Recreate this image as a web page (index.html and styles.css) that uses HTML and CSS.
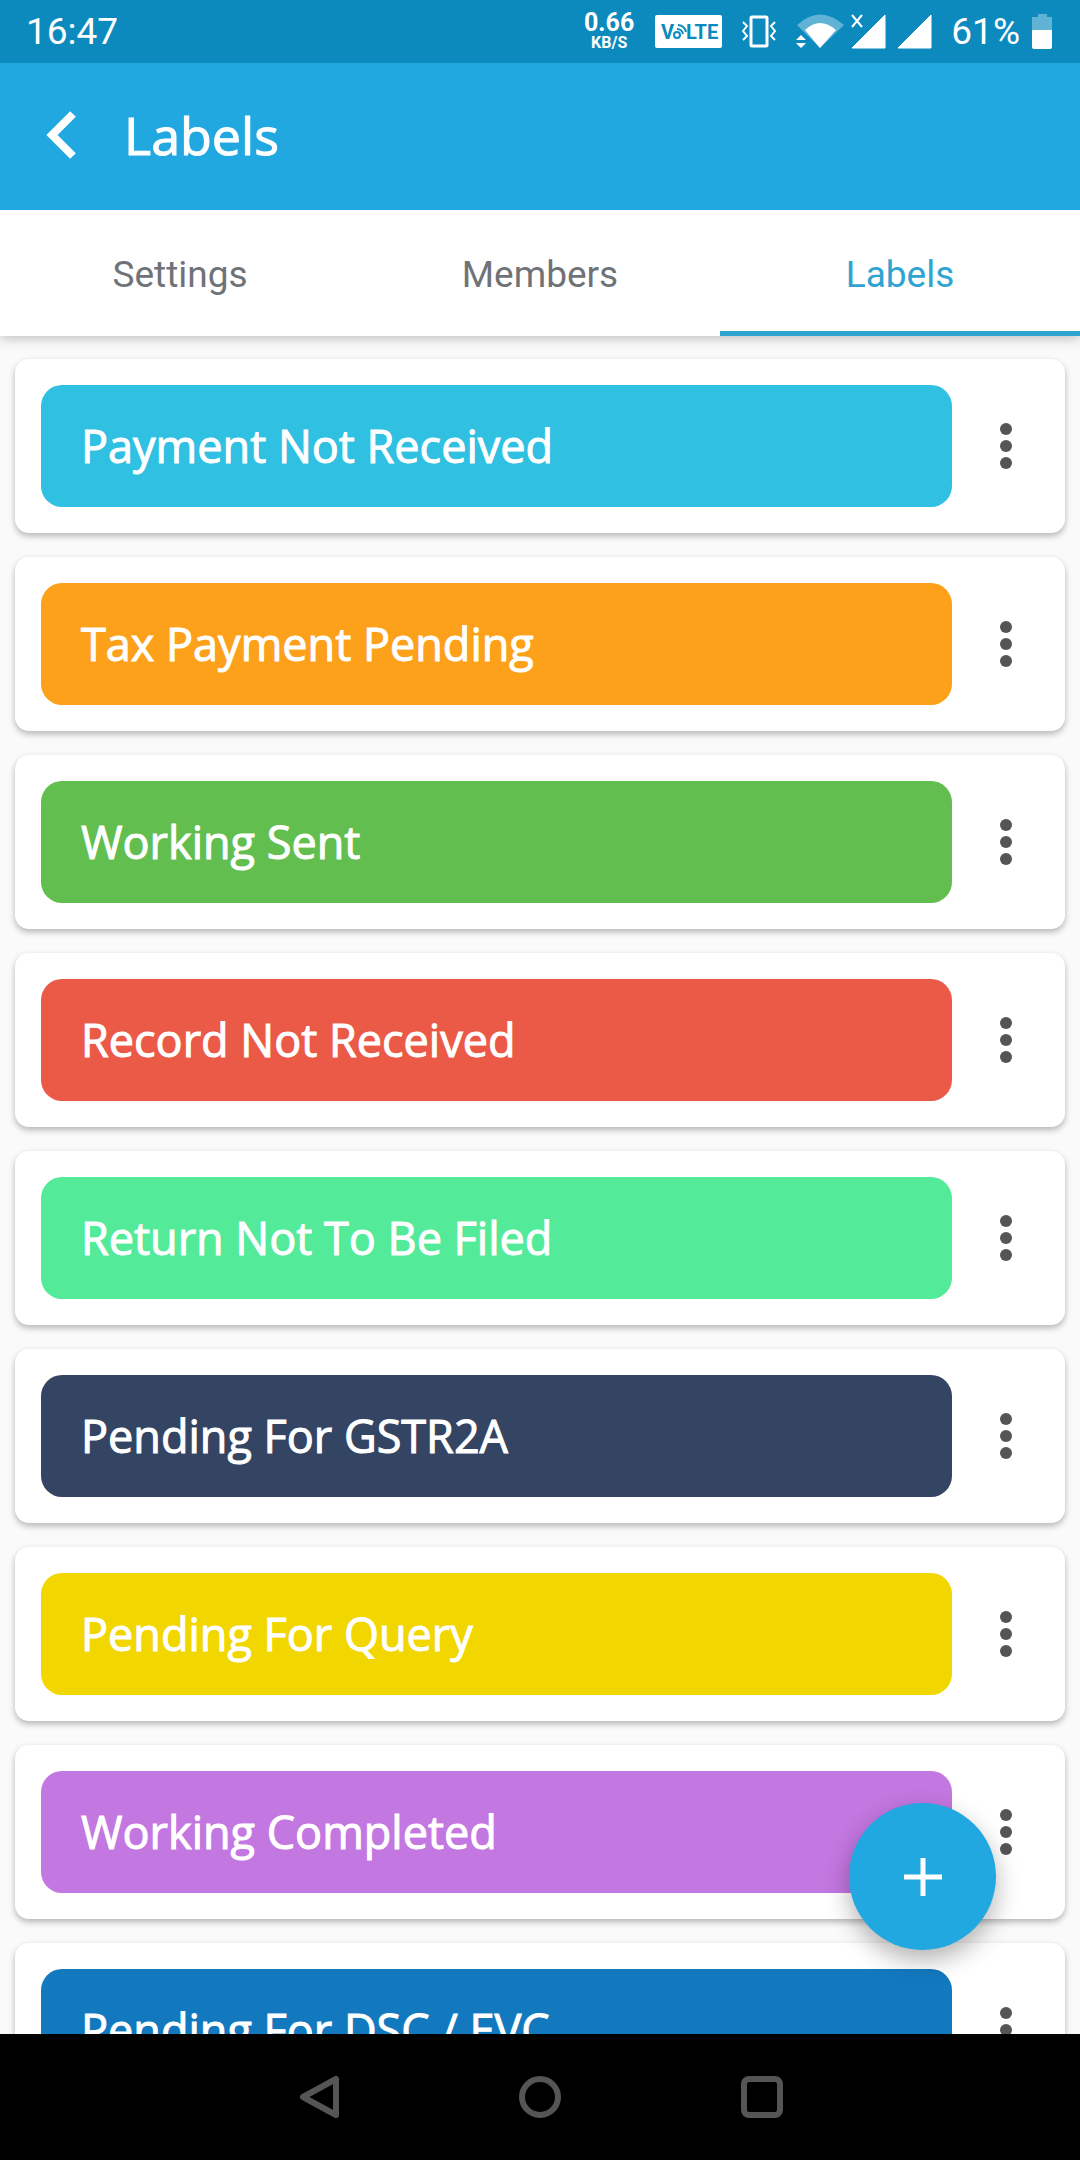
FILE: index.html
```html
<!DOCTYPE html>
<html lang="en">
<head>
    <meta charset="UTF-8">
    <meta name="viewport" content="width=device-width, initial-scale=1.0">
    <title>Labels</title>
    <link rel="stylesheet" href="styles.css">
</head>
<body>
    <div class="statusbar">
        <span class="time">16:47</span>
        <div class="status-icons">
            <div class="speed">
                <span class="speed-value">0.66</span>
                <span class="speed-unit">KB/S</span>
            </div>
            <svg class="volte" width="67" height="33" viewBox="0 0 67 33">
                <rect width="67" height="33" rx="2" fill="#fff"/>
                <text x="6" y="24">V</text>
                <text x="31" y="24">LTE</text>
                <circle cx="22" cy="20" r="3" fill="none" stroke="#0c8abe" stroke-width="2"/>
                <path d="M22 14a6 6 0 0 1 6 5M23 10a9 9 0 0 1 8 7" fill="none" stroke="#0c8abe" stroke-width="2"/>
            </svg>
            <svg class="vibrate" width="36" height="33" viewBox="0 0 36 33" fill="none" stroke="#fff">
                <rect x="10" y="2" width="16" height="29" rx="1" stroke-width="3"/>
                <path d="M2 7l4 4-4 5 4 5-4 4M34 7l-4 4 4 5-4 5 4 4" stroke-width="2"/>
            </svg>
            <svg class="wifi" width="48" height="35" viewBox="0 0 48 35">
                <path d="M1 11Q24-10 48 11L24 34z" fill="#fff" opacity=".35"/>
                <path d="M9 16Q24 2 40 16L24 34z" fill="#fff"/>
                <path d="M0 26h10L5 21zM0 29h10L5 34z" fill="#fff"/>
            </svg>
            <svg class="signal" width="35" height="35" viewBox="0 0 35 35">
                <path d="M34 1v33H1z" fill="#fff" stroke="#fff" stroke-linejoin="round"/>
                <path d="M1 1l10 12M11 1L1 13" stroke="#fff" stroke-width="2"/>
            </svg>
            <svg class="signal" width="35" height="35" viewBox="0 0 35 35">
                <path d="M34 1v33H1z" fill="#fff" stroke="#fff" stroke-linejoin="round"/>
            </svg>
            <span class="percent">61%</span>
            <svg class="battery" width="20" height="35" viewBox="0 0 20 35">
                <path d="M6 0h9v3h5v13H0V3h6z" fill="#fff" opacity=".35"/>
                <path d="M0 16h20v17a2 2 0 0 1-2 2H2a2 2 0 0 1-2-2z" fill="#fff"/>
            </svg>
        </div>
    </div>

    <header>
        <button class="back" aria-label="Back">
            <svg width="30" height="50" viewBox="0 0 30 50">
                <path d="M27 4L6 25L27 46" fill="none" stroke="#fff" stroke-width="8"/>
            </svg>
        </button>
        <h1>Labels</h1>
    </header>

    <nav class="tabs">
        <a href="#settings">Settings</a>
        <a href="#members">Members</a>
        <a href="#labels" class="active">Labels</a>
    </nav>

    <main>
        <div class="list">
            <div class="card">
                <span class="label cyan">Payment Not Received</span>
                <button class="more" aria-label="More options"><i></i><i></i><i></i></button>
            </div>
            <div class="card">
                <span class="label orange">Tax Payment Pending</span>
                <button class="more" aria-label="More options"><i></i><i></i><i></i></button>
            </div>
            <div class="card">
                <span class="label green">Working Sent</span>
                <button class="more" aria-label="More options"><i></i><i></i><i></i></button>
            </div>
            <div class="card">
                <span class="label red">Record Not Received</span>
                <button class="more" aria-label="More options"><i></i><i></i><i></i></button>
            </div>
            <div class="card">
                <span class="label mint">Return Not To Be Filed</span>
                <button class="more" aria-label="More options"><i></i><i></i><i></i></button>
            </div>
            <div class="card">
                <span class="label navy">Pending For GSTR2A</span>
                <button class="more" aria-label="More options"><i></i><i></i><i></i></button>
            </div>
            <div class="card">
                <span class="label yellow">Pending For Query</span>
                <button class="more" aria-label="More options"><i></i><i></i><i></i></button>
            </div>
            <div class="card">
                <span class="label purple">Working Completed</span>
                <button class="more" aria-label="More options"><i></i><i></i><i></i></button>
            </div>
            <div class="card">
                <span class="label blue">Pending For DSC / EVC</span>
                <button class="more" aria-label="More options"><i></i><i></i><i></i></button>
            </div>
        </div>
        <button class="add" aria-label="Add label">
            <svg width="38" height="38" viewBox="0 0 38 38">
                <path d="M19 0v38M0 19h38" stroke="#fff" stroke-width="5"/>
            </svg>
        </button>
    </main>

    <footer class="navbar">
        <button aria-label="Back">
            <svg width="44" height="44" viewBox="0 0 44 44">
                <path d="M40 4v36L7 22z"/>
            </svg>
        </button>
        <button aria-label="Home">
            <svg width="44" height="44" viewBox="0 0 44 44">
                <circle cx="22" cy="22" r="18"/>
            </svg>
        </button>
        <button aria-label="Recent apps">
            <svg width="44" height="44" viewBox="0 0 44 44">
                <rect x="4" y="4" width="36" height="36" rx="5"/>
            </svg>
        </button>
    </footer>
</body>
</html>
```

FILE: styles.css
```css
* {
    box-sizing: border-box;
}

body {
    margin: 0;
    height: 100vh;
    display: flex;
    flex-direction: column;
    background: #fafafa;
    font-family: Roboto, sans-serif;
}

button {
    padding: 0;
    border: none;
    background: none;
    cursor: pointer;
}

svg {
    display: block;
}

.statusbar {
    display: flex;
    flex-shrink: 0;
    align-items: center;
    justify-content: space-between;
    height: 63px;
    padding: 0 28px 0 26px;
    background: #0c8abe;
    color: white;
    font-size: 37px;
}

.status-icons {
    display: flex;
    align-items: center;
}

.speed {
    display: flex;
    flex-direction: column;
    align-items: center;
    font-weight: bold;
}

.speed-value {
    font-size: 25px;
    line-height: 22px;
}

.speed-unit {
    font-size: 16px;
    line-height: 18px;
}

.volte {
    margin: 0 19px 0 21px;
    font-size: 20px;
    font-weight: bold;
    fill: #0c8abe;
}

.wifi {
    margin-left: 19px;
}

.signal {
    margin-left: 7px;
}

.signal + .signal {
    margin-left: 11px;
}

.percent {
    margin: 0 12px 0 19px;
}

header {
    display: flex;
    flex-shrink: 0;
    align-items: center;
    height: 147px;
    padding: 0 46px 3px;
    background: #21a8e0;
    color: white;
}

h1 {
    margin: 0 0 0 48px;
    font-family: "Open Sans", sans-serif;
    font-size: 52px;
    font-weight: 500;
    line-height: 64px;
    -webkit-text-stroke: 1px white;
}

.tabs {
    display: flex;
    flex-shrink: 0;
    height: 126px;
    background: white;
    box-shadow: 0 2px 12px rgba(0, 0, 0, 0.25);
    clip-path: inset(0 0 -20px 0);
    z-index: 1;
}

.tabs a {
    flex: 1;
    padding-top: 8px;
    border-bottom: 5px solid transparent;
    color: #6f7377;
    font-size: 37px;
    line-height: 113px;
    text-align: center;
    text-decoration: none;
}

.tabs .active {
    border-color: #30a4d0;
    color: #30a4d0;
}

main {
    position: relative;
    flex: 1;
    min-height: 0;
}

.list {
    display: flex;
    flex-direction: column;
    gap: 24px;
    height: 100%;
    padding: 23px 15px;
    overflow-y: auto;
    scrollbar-width: none;
}

.card {
    display: flex;
    flex-shrink: 0;
    padding: 26px 5px 26px 26px;
    border-radius: 14px;
    background: white;
    box-shadow: 0 3px 6px rgba(0, 0, 0, 0.28);
}

.label {
    flex: 1;
    padding: 0 40px;
    border-radius: 21px;
    color: white;
    font-family: "Open Sans", sans-serif;
    font-size: 45px;
    font-weight: 500;
    line-height: 122px;
    -webkit-text-stroke: 1px white;
}

.cyan { background: #2fc0e2; }
.orange { background: #fda11b; }
.green { background: #62be4f; }
.red { background: #eb5a47; }
.mint { background: #53eb9a; }
.navy { background: #344563; }
.yellow { background: #f2d600; }
.purple { background: #c377e0; }
.blue { background: #1279bf; }

.more {
    display: flex;
    flex-direction: column;
    align-items: center;
    justify-content: center;
    gap: 5px;
    width: 108px;
}

.more i {
    width: 12px;
    height: 12px;
    border-radius: 50%;
    background: #555;
}

.add {
    position: absolute;
    right: 84px;
    bottom: 84px;
    display: flex;
    align-items: center;
    justify-content: center;
    width: 147px;
    height: 147px;
    border-radius: 50%;
    background: #21a8e0;
    box-shadow: 0 10px 24px rgba(0, 0, 0, 0.3);
}

.navbar {
    display: flex;
    flex-shrink: 0;
    align-items: center;
    justify-content: center;
    gap: 178px;
    height: 126px;
    background: black;
}

.navbar svg {
    fill: none;
    stroke: #555;
    stroke-width: 6;
    stroke-linejoin: round;
}
```
